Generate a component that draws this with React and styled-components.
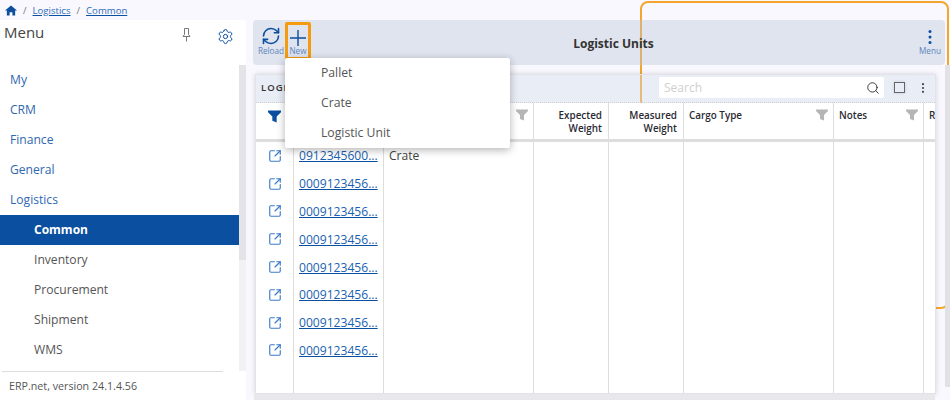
import React from 'react';
import styled, {createGlobalStyle} from 'styled-components';
import {Settings, RefreshCw, Search, SquareArrowOutUpRight} from 'lucide-react';

const GlobalStyle = createGlobalStyle`
  html, body {
    margin: 0;
    padding: 0;
    height: 100%;
    overflow: hidden;
    font-family: "Open Sans", "Liberation Sans", sans-serif;
    background: #F8F8FE;
  }
  * { box-sizing: border-box; }
`;

const Page = styled.div`
  position: relative;
  width: 950px;
  height: 400px;
  overflow: hidden;
  display: flex;
  flex-direction: column;
`;
const Crumbs = styled.div`
  height: 20px;
  flex: none;
  display: flex;
  align-items: center;
  gap: 6px;
  padding: 0 5px;
  font-size: 9.6px;
  color: #777;
`;
const CrumbLink = styled.a`
  color: #2F6DB8;
  text-decoration: underline;
  text-decoration-color: #0B4FA0;
`;
const Body = styled.div`
  flex: 1;
  display: flex;
  min-height: 0;
`;
const Sidebar = styled.aside`
  width: 246px;
  flex: none;
  background: #FFFFFF;
  display: flex;
  flex-direction: column;
`;
const SideHead = styled.div`
  height: 45px;
  flex: none;
  display: flex;
  align-items: flex-start;
  padding: 2px 12px 0 4px;
  font-size: 15px;
  color: #444;
`;
const SideTitle = styled.span`
  flex: 1;
`;
const SideIcon = styled.span`
  display: flex;
  margin-top: 6px;
  margin-left: ${props => props.gap || 0}px;
  color: ${props => props.color};
`;
const SideScroll = styled.div`
  flex: 1;
  display: flex;
  min-height: 0;
`;
const Nav = styled.nav`
  flex: 1;
`;
const ScrollTrack = styled.div`
  width: 7px;
  height: 100%;
  background: #F2F2F5;
`;
const ScrollThumb = styled.div`
  height: 195px;
  background: #E3E3E8;
`;
const NavItem = styled.div`
  height: 30px;
  display: flex;
  align-items: center;
  padding: 0 0 2px ${props => props.sub ? 34 : 10}px;
  font-size: ${props => props.active ? 12 : 12.1}px;
  font-weight: ${props => props.active ? 700 : 400};
  color: ${props => props.active ? '#FFFFFF' : props.sub ? '#555' : '#2F68B0'};
  background: ${props => props.active ? '#0B4FA0' : 'transparent'};
`;
const Version = styled.div`
  height: 29px;
  flex: none;
  margin: 0 23px 0 2px;
  padding-left: 7px;
  border-top: 1px solid #DDD;
  display: flex;
  align-items: center;
  font-size: 10.7px;
  color: #555;
`;
const Main = styled.main`
  position: relative;
  flex: 1;
  min-width: 0;
  padding: 0 5px 0 7px;
`;
const Annotation = styled.div`
  position: absolute;
  left: 640px;
  top: 1px;
  width: 309px;
  height: 308px;
  border: 2px solid #F4A62C;
  border-radius: 8px;
`;
const Toolbar = styled.div`
  position: relative;
  height: 45px;
  display: flex;
  align-items: flex-start;
  padding: 2px 2px 0 4px;
  background: rgba(185, 198, 214, 0.4);
  border-radius: 4px;
`;
const ToolButton = styled.button`
  width: ${props => props.w}px;
  height: 38px;
  padding: 0 0 4px;
  border: none;
  border-radius: 2px;
  background: transparent;
  box-shadow: ${props => props.hot ? 'inset 0 0 0 3px #F59B0F' : 'none'};
  display: flex;
  flex-direction: column;
  align-items: center;
  justify-content: flex-end;
  font: 8.2px/10px "Open Sans", sans-serif;
  color: #5C86C0;
  svg { margin-bottom: ${props => props.iconGap || 0}px; }
`;
const ToolTitle = styled.div`
  flex: 1;
  align-self: center;
  margin-top: -1px;
  text-align: center;
  font-size: 12px;
  font-weight: 700;
  color: #333;
  padding-right: 1px;
`;
const Grid = styled.section`
  position: relative;
  margin: 9px 0 0 2px;
  width: 681px;
  height: 320px;
  border: 1px solid #E2E2E8;
  box-shadow: 0 0 5px rgba(0, 0, 0, 0.15);
`;
const GridBar = styled.div`
  height: 28px;
  display: flex;
  align-items: center;
  padding: 0 10px 2px 5px;
  background: rgba(210, 220, 234, 0.4);
  border-bottom: 1px dotted #D0D0D0;
  font-size: 9.5px;
  font-weight: 600;
  letter-spacing: 1px;
  color: #333;
`;
const GridTitle = styled.span`
  flex: 1;
`;
const SearchBox = styled.div`
  width: 225px;
  height: 21px;
  background: #FFFFFF;
  border-radius: 2px;
  display: flex;
  align-items: center;
  justify-content: space-between;
  padding: 0 4px 0 5px;
  font-size: 12px;
  font-weight: 400;
  letter-spacing: 0;
  color: #CFCFCF;
`;
const SquareIcon = styled.span`
  width: 11px;
  height: 11px;
  margin: 0 16px 0 10px;
  border: 1px solid #666;
  box-shadow: 0 0 3px rgba(0, 0, 0, 0.15);
`;
const Table = styled.div`
  display: grid;
  grid-template-columns: 38px 90px 150px 75px 75px 150px 90px 1fr;
  height: 290px;
  overflow: hidden;
  background: #FFFFFF;
`;
const Column = styled.div`
  border-right: 1px solid #DDD;
  overflow: hidden;
  &:last-child { border-right: none; }
`;
const HeadCell = styled.div`
  position: relative;
  height: 39px;
  border-bottom: 3px solid #DDD;
  padding: 6px 6px 0 5px;
  font-size: 9.9px;
  line-height: 13px;
  font-weight: 600;
  color: #2A2A33;
  text-align: ${props => props.right ? 'right' : 'left'};
`;
const RowCell = styled.div`
  height: 27.8px;
  display: flex;
  align-items: center;
  padding-left: 5px;
  font-size: 12.1px;
  color: #444;
`;
const IconCell = styled(RowCell)`
  justify-content: center;
  padding: 0;
  color: #3D7CC9;
`;
const RowLink = styled.a`
  color: #1A5FB0;
  text-decoration: underline;
  text-decoration-color: #0B4FA0;
`;
const Dropdown = styled.div`
  position: absolute;
  left: 39px;
  top: 38px;
  width: 225px;
  height: 90px;
  background: #FFFFFF;
  border-radius: 2px;
  box-shadow: 0 2px 8px rgba(0, 0, 0, 0.3);
  z-index: 2;
`;
const DropItem = styled.div`
  height: 30px;
  display: flex;
  align-items: center;
  padding: 0 0 2px 36px;
  font-size: 12.2px;
  color: #555;
`;
const PageScrollY = styled.div`
  position: absolute;
  right: 0;
  top: 65px;
  width: 5px;
  height: 322px;
  background: #E2E2E6;
`;
const PageScrollX = styled.div`
  position: absolute;
  left: 8px;
  bottom: 0;
  width: 681px;
  height: 6px;
  background: #E8E8EC;
`;
const FilterSlot = styled.span`
  position: absolute;
  right: ${props => props.blue ? 12 : 5}px;
  top: ${props => props.blue ? 7 : 6}px;
  display: flex;
`;

const FunnelIcon = ({color, size = 12}) => (
    <svg width={size} height={size} viewBox="0 0 12 12">
        <path d="M0 .5h12v1.5L8 6v5.5L4 10V6L0 2z" fill={color}/>
    </svg>
);
const DotsIcon = ({color, h = 14}) => (
    <svg width="4" height={h} viewBox="0 0 4 14">
        <circle cx="2" cy="1.6" r="1.5" fill={color}/>
        <circle cx="2" cy="7" r="1.5" fill={color}/>
        <circle cx="2" cy="12.4" r="1.5" fill={color}/>
    </svg>
);
const PlusIcon = () => (
    <svg width="16" height="16" viewBox="0 0 16 16">
        <path d="M8 0v16M0 8h16" stroke="#0B4FA0" strokeWidth="1.4" fill="none"/>
    </svg>
);
const PinIcon = () => (
    <svg width="9" height="14" viewBox="0 0 9 14" fill="none" stroke="#777" strokeWidth="1">
        <path d="M2.5 .5h4v6l1.5 2H1l1.5-2zM4.5 8.5V13.5"/>
    </svg>
);
const HomeIcon = () => (
    <svg width="12" height="11" viewBox="0 0 13 11">
        <path d="M6.5 0L13 5.6h-2V11H8V7.5H5V11H2V5.6H0z" fill="#0B4FA0"/>
    </svg>
);

const navItems = [
    {label: 'My'}, {label: 'CRM'}, {label: 'Finance'}, {label: 'General'}, {label: 'Logistics'},
    {label: 'Common', sub: true, active: true},
    {label: 'Inventory', sub: true}, {label: 'Procurement', sub: true},
    {label: 'Shipment', sub: true}, {label: 'WMS', sub: true},
];
const links = ['0912345600...', ...Array(7).fill('0009123456...')];
const columns = [
    {title: '', blue: true, icons: true},
    {title: '', links: true},
    {title: '', filter: true, first: 'Crate'},
    {title: 'Expected Weight', right: true},
    {title: 'Measured Weight', right: true},
    {title: 'Cargo Type', filter: true},
    {title: 'Notes', filter: true},
    {title: 'R'},
];

export default class App extends React.Component {
    render() {
        return (
            <Page>
                <GlobalStyle/>
                <Annotation/>
                <Crumbs>
                    <HomeIcon/>
                    <span>/</span><CrumbLink>Logistics</CrumbLink><span>/</span><CrumbLink>Common</CrumbLink>
                </Crumbs>
                <Body>
                    <Sidebar>
                        <SideHead>
                            <SideTitle>Menu</SideTitle>
                            <SideIcon><PinIcon/></SideIcon>
                            <SideIcon gap={26} color="#0B4FA0"><Settings size={17} strokeWidth={1.4}/></SideIcon>
                        </SideHead>
                        <SideScroll>
                            <Nav>
                                {navItems.map(item => (
                                    <NavItem key={item.label} sub={item.sub} active={item.active}>{item.label}</NavItem>
                                ))}
                            </Nav>
                            <ScrollTrack><ScrollThumb/></ScrollTrack>
                        </SideScroll>
                        <Version>ERP.net, version 24.1.4.56</Version>
                    </Sidebar>
                    <Main>
                        <Toolbar>
                            <ToolButton w={28}><RefreshCw size={20} color="#0B4FA0" strokeWidth={1.9}/>Reload</ToolButton>
                            <ToolButton w={26} hot><PlusIcon/>New</ToolButton>
                            <ToolTitle>Logistic Units</ToolTitle>
                            <ToolButton w={26} iconGap={2}><DotsIcon color="#0B4FA0"/>Menu</ToolButton>
                        </Toolbar>
                        <Grid>
                            <GridBar>
                                <GridTitle>LOGI</GridTitle>
                                <SearchBox>Search<Search size={14} color="#333" strokeWidth={1.6}/></SearchBox>
                                <SquareIcon/>
                                <DotsIcon color="#444" h={10}/>
                            </GridBar>
                            <Table>
                                {columns.map((col, i) => (
                                    <Column key={`col-${i}`}>
                                        <HeadCell right={col.right}>
                                            {col.title}
                                            {col.filter && <FilterSlot><FunnelIcon color="#B5B5B5"/></FilterSlot>}
                                            {col.blue && <FilterSlot blue><FunnelIcon color="#0B4FA0" size={13}/></FilterSlot>}
                                        </HeadCell>
                                        {col.icons && links.map((l, r) => (
                                            <IconCell key={r}><SquareArrowOutUpRight size={14} strokeWidth={2}/></IconCell>
                                        ))}
                                        {col.links && links.map((l, r) => (
                                            <RowCell key={r}><RowLink>{l}</RowLink></RowCell>
                                        ))}
                                        {col.first && <RowCell>{col.first}</RowCell>}
                                    </Column>
                                ))}
                            </Table>
                        </Grid>
                        <Dropdown>
                            <DropItem>Pallet</DropItem>
                            <DropItem>Crate</DropItem>
                            <DropItem>Logistic Unit</DropItem>
                        </Dropdown>
                        <PageScrollX/>
                    </Main>
                </Body>
                <PageScrollY/>
            </Page>
        );
    }
}
